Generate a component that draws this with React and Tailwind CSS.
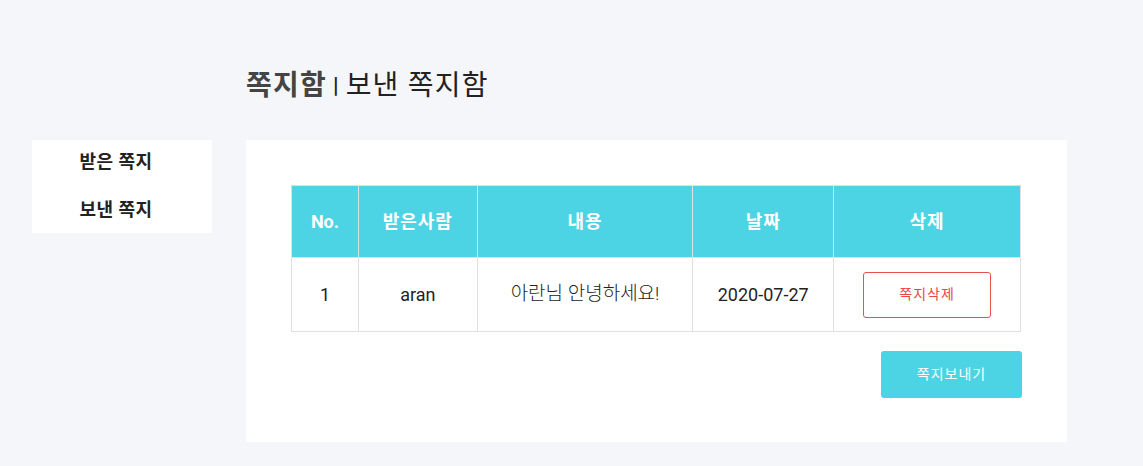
import React from "react"

const messages = [
  { no: 1, to: "aran", content: "아란님 안녕하세요!", date: "2020-07-27" },
]

const font = { fontFamily: 'Roboto, "Noto Sans CJK KR", sans-serif' }

const App = () => {
  return (
    <div className="min-h-[466px] bg-[#f5f6fa] text-[#222]" style={font}>
      <div className="flex pl-[32px] pt-[66px] pb-[25px]">
        {/* Sidebar */}
        <div className="mt-[74px] w-[180px] self-start bg-white pb-[3px] pr-[12px]">
          <div className="flex h-[42px] items-center justify-center text-[18px] font-bold tracking-[0.5px]">받은 쪽지</div>
          <div className="mt-[6px] flex h-[42px] items-center justify-center text-[18px] font-bold tracking-[0.5px]">보낸 쪽지</div>
        </div>

        {/* Main */}
        <div className="ml-[34px] w-[821px]">
          <h1 className="mb-[34px] flex h-[40px] items-center text-[28px] leading-[40px] tracking-[1.2px]">
            <span className="font-bold text-[#444]">쪽지함</span>
            <span className="mx-[6px] text-[22px] font-bold">|</span>
            <span>보낸 쪽지함</span>
          </h1>

          <div className="bg-white px-[45px] pt-[45px] pb-[44px]">
            <table className="w-[730px] border-collapse text-center">
              <thead>
                <tr className="h-[72px] bg-[#4dd4e4] text-[18px] font-bold text-white">
                  <th className="w-[67px] border border-[#dde1e5]">No.</th>
                  <th className="w-[119px] border border-[#dde1e5] tracking-[1px]">받은사람</th>
                  <th className="w-[216px] border border-[#dde1e5] tracking-[1px]">내용</th>
                  <th className="w-[141px] border border-[#dde1e5] tracking-[1px]">날짜</th>
                  <th className="w-[187px] border border-[#dde1e5] tracking-[1px]">삭제</th>
                </tr>
              </thead>
              <tbody>
                {messages.map((m) => (
                  <tr key={m.no} className="h-[74px] text-[18px]">
                    <td className="border border-[#dde1e5]">{m.no}</td>
                    <td className="border border-[#dde1e5]">{m.to}</td>
                    <td className="border border-[#dde1e5] text-[19px] font-light">{m.content}</td>
                    <td className="border border-[#dde1e5]">{m.date}</td>
                    <td className="border border-[#dde1e5]">
                      <button className="h-[46px] w-[128px] rounded-[3px] border border-[#e85050] bg-white text-[14px] tracking-[1px] text-[#e84848]">
                        쪽지삭제
                      </button>
                    </td>
                  </tr>
                ))}
              </tbody>
            </table>

            <div className="mt-[19px] flex justify-end">
              <button className="h-[47px] w-[141px] rounded-[3px] bg-[#4dd4e4] text-[14px] tracking-[1px] text-white">
                쪽지보내기
              </button>
            </div>
          </div>
        </div>
      </div>
    </div>
  )
}

export default App
